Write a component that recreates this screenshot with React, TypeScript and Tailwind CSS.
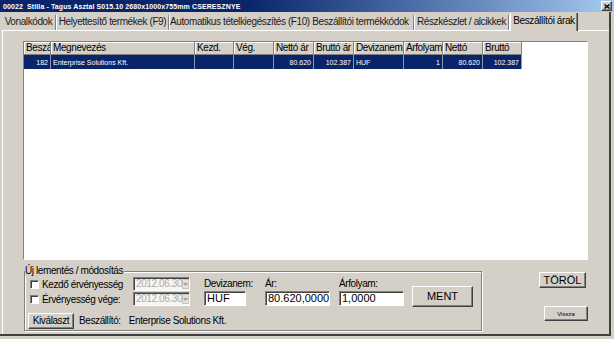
import { useState } from 'react';

const ui = "font-['Liberation_Sans',Arial,sans-serif] text-[10px] tracking-[-0.4px]";
const arial = "font-['Liberation_Sans',Arial,sans-serif] tracking-normal";

const tabs = [
    { label: 'Vonalkódok', w: 'w-[55px]' },
    { label: 'Helyettesítő termékek (F9)', w: 'w-[113px]' },
    { label: 'Automatikus tételkiegészítés (F10)', w: 'w-[138px]' },
    { label: 'Beszállítói termékkódok', w: 'w-[107px]' },
    { label: 'Részkészlet / alcikkek', w: 'w-[95px]' },
];

const columns = [
    { label: 'Beszállító', w: 'w-[27px]', value: '182', right: true },
    { label: 'Megnevezés', w: 'w-[144px]', value: 'Enterprise Solutions Kft.', right: false },
    { label: 'Kezd.', w: 'w-[39px]', value: '', right: false },
    { label: 'Vég.', w: 'w-[40px]', value: '', right: false },
    { label: 'Nettó ár', w: 'w-[40px]', value: '80.620', right: true },
    { label: 'Bruttó ár', w: 'w-[40px]', value: '102.387', right: true },
    { label: 'Devizanem', w: 'w-[50px]', value: 'HUF', right: false },
    { label: 'Árfolyam', w: 'w-[39px]', value: '1', right: true },
    { label: 'Nettó', w: 'w-[40px]', value: '80.620', right: true },
    { label: 'Bruttó', w: 'w-[39px]', value: '102.387', right: true },
];

const raised =
    'border border-t-white border-l-white border-r-[#404040] border-b-[#404040] bg-[#d4d0c8] shadow-[inset_-1px_-1px_0_#808080]';
const sunken =
    'border border-t-[#808080] border-l-[#808080] border-r-white border-b-white shadow-[inset_1px_1px_0_#404040]';

function Checkbox() {
    return <span className={`block h-[9px] w-[9px] shrink-0 bg-white ${sunken}`} />;
}

function DateField({ value }: { value: string }) {
    return (
        <div className={`flex h-[14px] w-[57px] items-center bg-[#f7f6f3] ${sunken}`}>
            <span className="flex-1 pl-[2px] text-[10px] leading-none text-[#a8a8a8]">{value}</span>
            <span className="mr-px flex h-[10px] w-[8px] items-center justify-center border border-[#c8c4bc] bg-[#e4e2dc]">
                <svg width="5" height="3" viewBox="0 0 5 3">
                    <path d="M0 0h5L2.5 3z" fill="#a0a0a0" />
                </svg>
            </span>
        </div>
    );
}

function TextInput({ value, w }: { value: string; w: string }) {
    return (
        <div className={`flex h-[15px] items-center bg-white pl-[2px] ${w} ${sunken}`}>
            <span className={`text-[11px] leading-none text-black ${arial}`}>{value}</span>
        </div>
    );
}

export default function App() {
    const [active] = useState(5);

    return (
        <div className={`flex h-[339px] w-[614px] flex-col overflow-hidden bg-[#d4d0c8] text-black ${ui}`}>
            {/* Title bar */}
            <div className="flex h-[12px] items-center bg-linear-to-r from-[#0a246a] via-[#0a246a] via-40% to-[#a6caf0] pl-[3px] pr-[2px]">
                <span className="flex-1 whitespace-pre text-[7px] leading-none font-bold tracking-[0.1px] text-white">
                    00022  Stilla - Tagus Asztal S015.10 2680x1000x755mm CSERESZNYE
                </span>
                <span className={`flex h-[10px] w-[11px] items-center justify-center ${raised}`}>
                    <svg width="6" height="5" viewBox="0 0 6 5">
                        <path d="M0.5 0.5l5 4M5.5 0.5l-5 4" stroke="#000" strokeWidth="1.4" />
                    </svg>
                </span>
            </div>

            {/* Client area */}
            <div className="mr-[3px] mb-[3px] flex flex-1 flex-col border-r-2 border-b-2 border-r-[#404040] border-b-[#404040]">
                {/* Tabs */}
                <div className="flex h-[18px] items-end pl-[2px]">
                    {tabs.map((t) => (
                        <div key={t.label} className={`flex h-[16px] shrink-0 items-center ${t.w}`}>
                            <span className="flex-1 pb-px text-center leading-none whitespace-nowrap text-[#1a1a1a]">
                                {t.label}
                            </span>
                            <span className="h-[15px] w-px bg-[#808080]" />
                            <span className="h-[15px] w-px bg-white" />
                        </div>
                    ))}
                    <div
                        className={`relative z-10 -mb-px flex h-[18px] w-[68px] shrink-0 items-center justify-center border-r border-l border-r-[#404040] border-l-white bg-[#d4d0c8] pb-[2px] shadow-[inset_-1px_0_0_#808080] ${active === 5 ? 'text-black' : ''}`}
                    >
                        <span className="leading-none whitespace-nowrap">Beszállítói árak</span>
                    </div>
                </div>

                {/* Tab panel */}
                <div className="ml-[2px] flex flex-1 flex-col border-t border-l border-white pt-[10px] pr-[21px] pl-[20px]">
                    {/* Grid */}
                    <div className="h-[219px] border border-t-[#808080] border-r-white border-b-white border-l-[#808080] bg-white">
                        <div className="flex h-[13px]">
                            {columns.map((c) => (
                                <div
                                    key={c.label}
                                    className={`flex h-full shrink-0 items-center overflow-hidden border-r border-b border-[#808080] bg-[#d4d0c8] pl-[2px] shadow-[inset_1px_1px_0_white] ${c.w}`}
                                >
                                    <span className="leading-none whitespace-nowrap">{c.label}</span>
                                </div>
                            ))}
                        </div>
                        <div className="flex h-[14px]">
                            {columns.map((c) => (
                                <div
                                    key={c.label}
                                    className={`flex h-full shrink-0 items-center overflow-hidden border-r border-[#8a93b8] bg-[#0a246a] px-[2px] ${c.w} ${c.right ? 'justify-end' : 'justify-start'}`}
                                >
                                    <span className={`text-[7px] leading-none whitespace-nowrap text-white ${arial}`}>{c.value}</span>
                                </div>
                            ))}
                        </div>
                    </div>

                    {/* Bottom area */}
                    <div className="flex">
                        <div className="relative mt-[11px] ml-px h-[60px] w-[458px] shrink-0 border border-[#808080] shadow-[inset_1px_1px_0_white,1px_1px_0_white]">
                            <span className="absolute -top-[6px] left-0 bg-[#d4d0c8] pr-px leading-none">
                                Új lementés / módosítás
                            </span>
                            <div className="flex pt-[5px] pl-[5px]">
                                <div className="flex w-[103px] shrink-0 flex-col">
                                    <div className="flex h-[15px] items-center gap-[3px]">
                                        <Checkbox />
                                        <span className="leading-none whitespace-nowrap">Kezdő érvényesség</span>
                                    </div>
                                    <div className="flex h-[15px] items-center gap-[3px]">
                                        <Checkbox />
                                        <span className="leading-none whitespace-nowrap">Érvényesség vége:</span>
                                    </div>
                                </div>
                                <div className="flex shrink-0 flex-col gap-px">
                                    <DateField value="2012.06.30" />
                                    <DateField value="2012.06.30" />
                                </div>
                                <div className="ml-[14px] flex w-[42px] shrink-0 flex-col">
                                    <span className="flex h-[14px] items-center leading-none whitespace-nowrap">Devizanem:</span>
                                    <TextInput value="HUF" w="w-[42px]" />
                                </div>
                                <div className="ml-[19px] flex shrink-0 flex-col">
                                    <span className="flex h-[14px] items-center leading-none">Ár:</span>
                                    <TextInput value="80.620,0000" w="w-[65px]" />
                                </div>
                                <div className="ml-[9px] flex shrink-0 flex-col">
                                    <span className="flex h-[14px] items-center leading-none">Árfolyam:</span>
                                    <TextInput value="1,0000" w="w-[65px]" />
                                </div>
                                <button
                                    className={`mt-[9px] ml-[8px] flex h-[21px] w-[61px] shrink-0 items-center justify-center text-[11px] leading-none ${raised} ${arial}`}
                                >
                                    MENT
                                </button>
                            </div>
                            <div className="mt-[6px] flex items-center pl-[3px]">
                                <button className={`flex h-[16px] w-[46px] items-center justify-center leading-none ${raised}`}>
                                    Kiválaszt
                                </button>
                                <span className="ml-[5px] leading-none">Beszállító:</span>
                                <span className="ml-[8px] leading-none">Enterprise Solutions Kft.</span>
                            </div>
                        </div>
                        <div className="flex flex-1 flex-col items-end">
                            <button
                                className={`mt-[12px] mr-[2px] flex h-[16px] w-[47px] items-center justify-center text-[11px] leading-none ${raised} ${arial}`}
                            >
                                TÖRÖL
                            </button>
                            <button
                                className={`mt-[18px] flex h-[15px] w-[44px] items-center justify-center text-[6px] leading-none ${raised} ${arial}`}
                            >
                                Vissza
                            </button>
                        </div>
                    </div>
                </div>
            </div>
        </div>
    );
}
